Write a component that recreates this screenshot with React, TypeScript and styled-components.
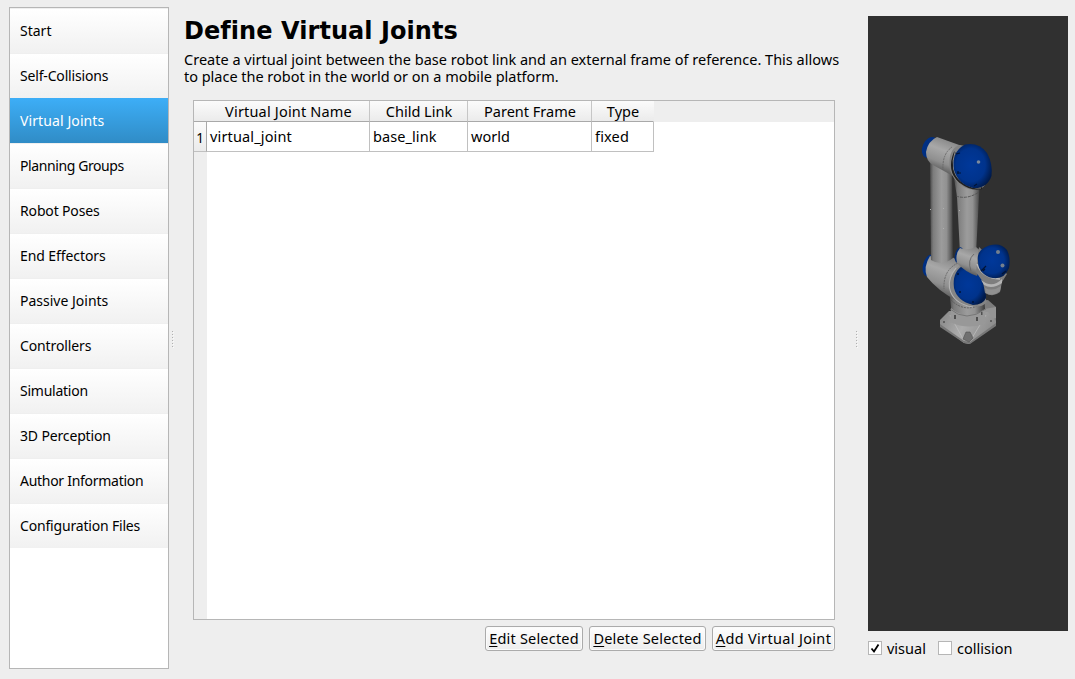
import React from "react";
import styled, { createGlobalStyle } from "styled-components";

const GlobalStyle = createGlobalStyle`
  * { box-sizing: border-box; }
  body {
    margin: 0;
    background: #eeeeee;
    color: #000;
    font-family: "Noto Sans", "Open Sans", sans-serif;
    font-size: 14px;
    overflow: hidden;
  }
`;

const Window = styled.div`
  display: flex;
  width: 1075px;
  height: 679px;
  padding: 7px 7px 10px 9px;
`;

const Sidebar = styled.nav`
  width: 160px;
  height: 662px;
  border: 1px solid #b6b6b6;
  background: #fff;
`;

const NavItem = styled.div<{ $selected?: boolean }>`
  height: 45px;
  padding-left: 10px;
  border-top: ${(p) => (p.$selected ? "0" : "1px solid #efefef")};
  line-height: ${(p) => (p.$selected ? 45 : 43)}px;
  white-space: nowrap;
  color: ${(p) => (p.$selected ? "#fff" : "#000")};
  background: ${(p) =>
    p.$selected
      ? "linear-gradient(#3daef7, #308cc6)"
      : "linear-gradient(#ffffff, #f1f1f1)"};
`;

const Fit = styled.span<{ $ls?: number }>`
  letter-spacing: ${(p) => p.$ls ?? 0}px;
  white-space: nowrap;
`;

const Handle = styled.div<{ $left: number; $width: number }>`
  width: ${(p) => p.$width}px;
  padding: 324px 0 0 ${(p) => p.$left}px;
  flex: none;
`;

const Dot = styled.div`
  width: 1px;
  height: 1px;
  margin-bottom: 2px;
  background: #b0b0b0;
  box-shadow: 1px 1px 0 #fafafa;
`;

const Main = styled.main`
  width: 660px;
  flex: none;
  display: flex;
  flex-direction: column;
`;

const Title = styled.h1`
  margin: 9px 0 0;
  font: bold 24px/30px "DejaVu Sans", sans-serif;
  letter-spacing: 0.06px;
  white-space: nowrap;
`;

const Description = styled.p`
  margin: 5px 0 0;
  height: 34px;
  line-height: 17px;
  font-size: 14.5px;
`;

const Line = styled.span<{ $ls: number }>`
  display: block;
  white-space: nowrap;
  letter-spacing: ${(p) => p.$ls}px;
`;

const TableFrame = styled.section`
  margin: 15px 0 0 9px;
  width: 642px;
  height: 520px;
  border: 1px solid #b6b6b6;
  background: linear-gradient(to right, #eeeeee 13px, #fff 13px);
  font-size: 14.5px;
`;

const HeaderRow = styled.div`
  display: flex;
  height: 21px;
  background: #eeeeee;
`;

const HeaderCell = styled.div<{ $w: number; $last?: boolean }>`
  width: ${(p) => p.$w}px;
  height: 21px;
  padding-left: 1px;
  border-right: 1px solid ${(p) => (p.$last ? "transparent" : "#c6c6c6")};
  border-bottom: 1px solid #a9a9a9;
  background: linear-gradient(#fbfbfb, #f3f3f3 50%, #ebebeb);
  text-align: center;
  line-height: 21px;
`;

const Corner = styled(HeaderCell)`
  border-right: 0;
`;

const BodyRow = styled.div`
  display: flex;
  height: 30px;
`;

const RowNumber = styled.div`
  width: 13px;
  border-right: 1px solid #a9a9a9;
  border-bottom: 1px solid #c0c0c0;
  background: linear-gradient(#fbfbfb, #ebebeb);
  line-height: 32px;
  font-size: 13.5px;
  text-align: center;
`;

const Cell = styled.div<{ $w: number }>`
  width: ${(p) => p.$w}px;
  padding-left: 3px;
  border-right: 1px solid #c0c0c0;
  border-bottom: 1px solid #c0c0c0;
  background: #fff;
  line-height: 29px;
`;

const Actions = styled.div`
  display: flex;
  gap: 6px;
  margin: 6px 0 0 301px;
`;

const Button = styled.button<{ $w: number; $ls: number }>`
  width: ${(p) => p.$w}px;
  height: 25px;
  padding: 0;
  border: 1px solid #ababab;
  border-radius: 3px;
  background: linear-gradient(#fefefe, #ededed);
  box-shadow: inset 0 0 0 1px #fbfbfb;
  color: #000;
  font: 14.5px/23px "Noto Sans", sans-serif;
  letter-spacing: ${(p) => p.$ls}px;
  white-space: nowrap;
`;

const Mnemonic = styled.span`
  text-decoration: underline;
  text-decoration-thickness: 1px;
  text-underline-offset: 2px;
`;

const Preview = styled.aside`
  width: 200px;
  margin-top: 9px;
  flex: none;
`;

const Viewport = styled.div`
  height: 615px;
  padding: 104px 0 0 32px;
  background: #303030;
`;

const Options = styled.div`
  display: flex;
  align-items: center;
  height: 14px;
  margin-top: 10px;
  font-size: 14.5px;
`;

const Box = styled.span`
  display: flex;
  width: 14px;
  height: 14px;
  margin-right: 5px;
  border: 1px solid #b6b6b6;
  background: #fff;
`;

const OptionLabel = styled.label<{ $w: number; $ls: number }>`
  display: flex;
  align-items: center;
  width: ${(p) => p.$w}px;
  line-height: 14px;
  letter-spacing: ${(p) => p.$ls}px;
`;

const navItems: [string, number][] = [
  ["Start", 0],
  ["Self-Collisions", -0.17],
  ["Virtual Joints", 0.1],
  ["Planning Groups", -0.4],
  ["Robot Poses", -0.15],
  ["End Effectors", -0.08],
  ["Passive Joints", 0],
  ["Controllers", -0.12],
  ["Simulation", -0.25],
  ["3D Perception", -0.15],
  ["Author Information", -0.28],
  ["Configuration Files", -0.18],
];

const columns: { name: string; value: string; w: number; hls: number; ls: number }[] = [
  { name: "Virtual Joint Name", value: "virtual_joint", w: 163, hls: 0.18, ls: 0.15 },
  { name: "Child Link", value: "base_link", w: 98, hls: 0, ls: 0.08 },
  { name: "Parent Frame", value: "world", w: 124, hls: 0, ls: 0 },
  { name: "Type", value: "fixed", w: 62, hls: 0, ls: 0.15 },
];

const Splitter = ({ left, width }: { left: number; width: number }) => (
  <Handle $left={left} $width={width}>
    {[0, 1, 2, 3, 4, 5].map((i) => (
      <Dot key={i} />
    ))}
  </Handle>
);

const Robot = () => (
  <svg width="130" height="230" viewBox="900 120 130 230" display="block">
    <defs>
      <linearGradient id="tube" x1="0" x2="1" y1="0" y2="0">
        <stop offset="0" stopColor="#4a4a4a" />
        <stop offset=".14" stopColor="#7c7c7c" />
        <stop offset=".5" stopColor="#9c9c9c" />
        <stop offset=".72" stopColor="#919191" />
        <stop offset=".9" stopColor="#5e5e5e" />
        <stop offset="1" stopColor="#3a3a3a" />
      </linearGradient>
      <linearGradient id="elbow" x1=".65" y1="0" x2=".3" y2="1">
        <stop offset="0" stopColor="#808080" />
        <stop offset=".35" stopColor="#a8a8a8" />
        <stop offset=".65" stopColor="#8f8f8f" />
        <stop offset="1" stopColor="#3c3c3c" />
      </linearGradient>
      <radialGradient id="cap" cx=".45" cy=".48" r=".58">
        <stop offset="0" stopColor="#00389a" />
        <stop offset=".65" stopColor="#00338c" />
        <stop offset="1" stopColor="#001a4a" />
      </radialGradient>
      <linearGradient id="base" x1="0" y1="0" x2="1" y2=".3">
        <stop offset="0" stopColor="#858585" />
        <stop offset=".5" stopColor="#acacac" />
        <stop offset="1" stopColor="#8d8d8d" />
      </linearGradient>
    </defs>

    {/* mounting plate and base */}
    <path d="M973 310 L977 301 L988 300 L996 307 V321 L985 325Z" fill="#7c7c7c" />
    <path d="M984 309 L996 307 V318 L988 321Z" fill="#949494" />
    <path d="M940 320 L949 311 L988 312 L996 321 V325 L969 344 L964 343 L940 325Z" fill="url(#base)" />
    <path d="M940 324 L964 341 L970 342 L996 323 V326 L970 344 L964 343 L940 327Z" fill="#777" />
    <path d="M950 315 L963 339 M986 315 L972 338" stroke="#bcbcbc" strokeWidth=".8" fill="none" />
    <path d="M963 339 L966 332 H970 L973 338 L969 342Z" fill="#707070" stroke="#505050" strokeWidth=".6" />
    <path d="M949 288 L951 307 Q951 322 967 324 Q985 323 985 309 L984 296Z" fill="url(#tube)" />
    <path d="M951 308 Q966 322 985 309 Q986 321 984 324 Q967 330 950 322Z" fill="#989898" />
    <path d="M951 300 Q965 314 984 303" fill="none" stroke="#555" strokeWidth=".8" strokeDasharray="2 1" />
    <path d="M950 309 Q966 323 986 309" fill="none" stroke="#6f6f6f" strokeWidth=".8" />
    <g fill="#4f4f4f">
      <rect x="954" y="315" width="2" height="4" />
      <rect x="976" y="317" width="2" height="4" />
      <circle cx="944" cy="322" r="1" />
      <circle cx="991" cy="321" r="1" />
      <rect x="981" y="312" width="1.5" height="3" />
    </g>

    {/* shoulder body */}
    <ellipse cx="929" cy="265.500" rx="6" ry="11" transform="rotate(14 929 265.500)" fill="#002f82" />
    <path d="M930 256 Q942 261 952 257 L969 267 L957 301 Q937 290 927 277 Q923 267 930 256Z" fill="url(#elbow)" />

    {/* arm tubes */}
    <path d="M930 158 L952 165 L953 258 Q942 267 931 260Z" fill="url(#tube)" />
    <path d="M954 178 L980 182 L979 197 L976 254 L960 253 L957 197Z" fill="url(#tube)" />
    <path d="M956 196 Q967 200 979 192" fill="none" stroke="#4b4b4b" strokeWidth=".8" strokeDasharray="3 1" />

    {/* shoulder joint */}
    <path d="M958 263 Q943 270 944 289" fill="none" stroke="#606060" strokeWidth=".8" strokeDasharray="2 .8" />
    <path d="M964 264 Q950 270 949 287 Q950 301 967 306 Q981 309 987 302 L974 267Z" fill="#858585" />
    <path d="M956 268 Q948 278 949.500 288 Q953 304 973 307" fill="none" stroke="#b4b4b4" strokeWidth="1.1" />
    <path d="M962 266 Q971 264 979 275 Q986 285 986 298 Q983 305 973 305 Q957 301 954 288 Q952 273 962 266Z" fill="url(#cap)" />

    {/* wrist */}
    <ellipse cx="959" cy="255" rx="4" ry="8" transform="rotate(14 959 255)" fill="#002c78" />
    <path d="M960 248 Q967 251 976 247 L984 254 L977 276 Q965 272 957 263 Q955 254 960 248Z" fill="url(#elbow)" />
    <path d="M974 254 Q967 260 971 271" fill="none" stroke="#606060" strokeWidth=".8" />
    <path d="M979 247 L976 272 L983 282 L985 293 Q993 298 1000 292 L1002 282 L1007 274Z" fill="#7e7e7e" />
    <path d="M981 280 Q992 289 1002 279 V283 Q992 290 984 285Z" fill="#b4b4b4" />
    <path d="M985 288 Q993 292 1001 286 L1000 291 Q993 297 986 293Z" fill="#909090" />
    <path d="M977 264 Q982 278 1000 279" fill="none" stroke="#bababa" strokeWidth="1.500" />
    <path d="M978 261 Q976 250 989 245.500 Q1001 242 1007 250 Q1011 258 1009 268 Q1004 281 990 277.500 Q978 273 978 261Z" fill="url(#cap)" />
    <path d="M981 271 L986 266 M983 271 L985 269 M1002 274 L1006 271" stroke="#001437" strokeWidth="1.2" />
    <circle cx="998" cy="252" r="2" fill="#74808e" />
    <circle cx="1002.500" cy="265.500" r="2" fill="#74808e" />

    {/* upper elbow */}
    <ellipse cx="930" cy="147.500" rx="7.500" ry="11" transform="rotate(24 930 147.500)" fill="#002f82" />
    <path d="M937 137 L962 146 L953 176 L933 165 Q926 161 926 152 Q928 141 937 137Z" fill="url(#elbow)" />
    <path d="M952 147 Q942 154 943 170" fill="none" stroke="#626262" strokeWidth=".8" strokeDasharray="2 .8" />
    <path d="M959 145 Q947 150 950 170 Q956 187 973 190 Q982 190 985 185 L966 146Z" fill="#838383" />
    <path d="M955 152 Q947 171 960 182 Q972 191 982 188" fill="none" stroke="#202020" strokeWidth="2" />
    <path d="M955 152 Q949 170 962 182 Q972 189 981 188" fill="none" stroke="#a4a4a4" strokeWidth=".8" />
    <path d="M965 144.500 Q979 142 987 153 Q993 164 991.500 176 Q987 189 973 188 Q958 184 954 170 Q951 152 965 144.500Z" fill="url(#cap)" />
    <path d="M956 154 L960 153 M957 173 L961 173 M974 186 L977 184 M958 171 V174" stroke="#001437" strokeWidth="1.2" />
    <circle cx="978.500" cy="162" r="1.800" fill="#7c8b9d" />

    {/* screw heads and highlights */}
    <path d="M957 274 H959 M959 292 H961 M973 301 V303" stroke="#001437" strokeWidth="1.5" />
    <g fill="#b0b0b0">
      <rect x="930" y="209" width="1" height="1" />
      <rect x="943" y="208" width="1" height="1" />
      <rect x="943" y="228" width="1" height="1" />
      <rect x="959" y="210" width="1" height="1" />
    </g>
  </svg>
);

export default function App() {
  return (
    <>
      <GlobalStyle />
      <Window>
        <Sidebar>
          {navItems.map(([name, ls]) => (
            <NavItem key={name} $selected={name === "Virtual Joints"}>
              <Fit $ls={ls}>{name}</Fit>
            </NavItem>
          ))}
        </Sidebar>
        <Splitter left={3} width={15} />
        <Main>
          <Title>Define Virtual Joints</Title>
          <Description>
            <Line $ls={0.01}>
              Create a virtual joint between the base robot link and an external frame of reference. This allows
            </Line>
            <Line $ls={-0.02}>to place the robot in the world or on a mobile platform.</Line>
          </Description>
          <TableFrame>
            <HeaderRow>
              <Corner $w={13} />
              {columns.map((c, i) => (
                <HeaderCell key={c.name} $w={c.w} $last={i === 3}>
                  <Fit $ls={c.hls}>{c.name}</Fit>
                </HeaderCell>
              ))}
            </HeaderRow>
            <BodyRow>
              <RowNumber>1</RowNumber>
              {columns.map((c) => (
                <Cell key={c.name} $w={c.w}>
                  <Fit $ls={c.ls}>{c.value}</Fit>
                </Cell>
              ))}
            </BodyRow>
          </TableFrame>
          <Actions>
            <Button $w={98} $ls={0.2}>
              <Mnemonic>E</Mnemonic>dit Selected
            </Button>
            <Button $w={117} $ls={0.2}>
              <Mnemonic>D</Mnemonic>elete Selected
            </Button>
            <Button $w={123} $ls={0.33}>
              <Mnemonic>A</Mnemonic>dd Virtual Joint
            </Button>
          </Actions>
        </Main>
        <Splitter left={12} width={24} />
        <Preview>
          <Viewport>
            <Robot />
          </Viewport>
          <Options>
            <OptionLabel $w={70} $ls={0}>
              <Box>
                <svg width="12" height="12" viewBox="0 0 12 12">
                  <path d="M2.500 6.500 L5 9.500 L9.500 2.500" fill="none" stroke="#000" strokeWidth="1.800" />
                </svg>
              </Box>
              visual
            </OptionLabel>
            <OptionLabel $w={90} $ls={0}>
              <Box />
              collision
            </OptionLabel>
          </Options>
        </Preview>
      </Window>
    </>
  );
}
